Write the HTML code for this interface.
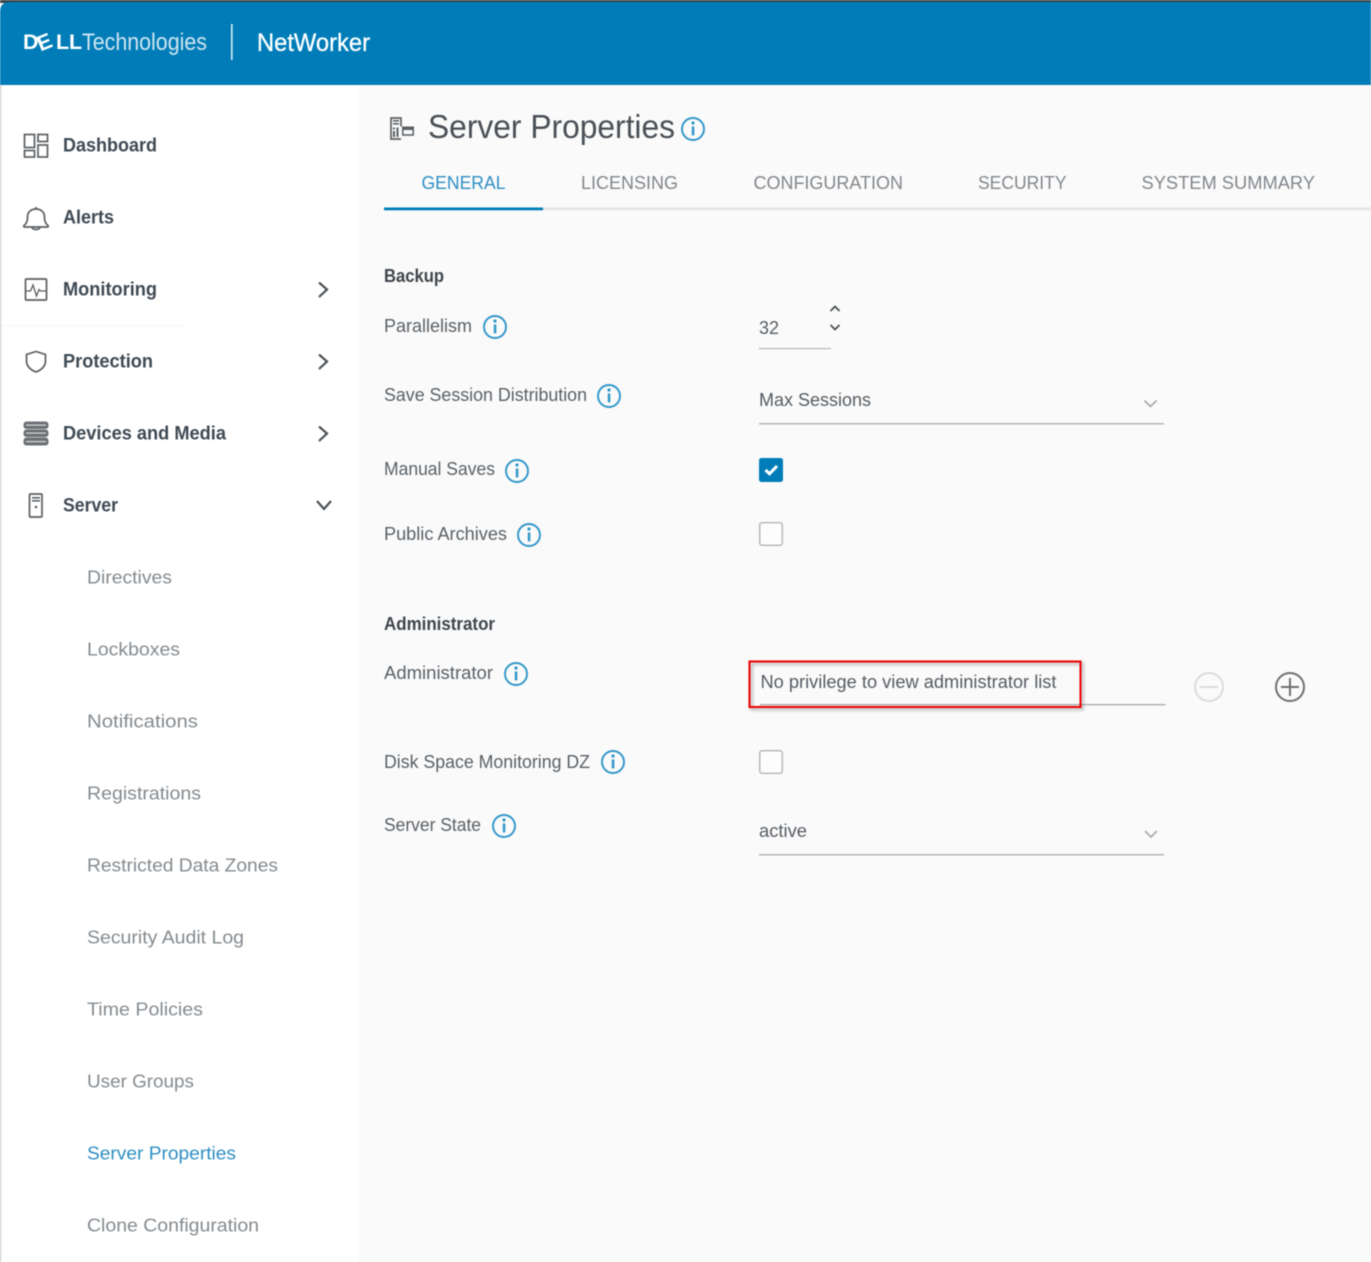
<!DOCTYPE html>
<html lang="en">
<head>
<meta charset="utf-8">
<title>Server Properties</title>
<style>
html,body{margin:0;padding:0;background:#fafafa;width:1371px;height:1262px;overflow:hidden}
svg{display:block;filter:blur(.45px)}
text{font-family:"Liberation Sans",sans-serif;white-space:pre}
.nav{font-size:19.5px;font-weight:700;fill:#3f4a54}
.sub{font-size:18.5px;fill:#858b90}
.lab{font-size:18px;fill:#5a6167}
.hd{font-size:18px;font-weight:700;fill:#3f454b}
.tab{font-size:18.5px;fill:#82878c}
.val{font-size:18px;fill:#565c62}
.ic{fill:none;stroke:#5b5f63;stroke-width:1.7}
.chev{fill:none;stroke:#4c5054;stroke-width:2.2}
</style>
</head>
<body>
<svg xmlns="http://www.w3.org/2000/svg" width="1371" height="1262" viewBox="0 0 1371 1262">
<defs>
<symbol id="inf" viewBox="-12 -12 24 24" overflow="visible">
<circle r="11" fill="none" stroke="#2f97c9" stroke-width="1.900"/>
<rect x="-1.200" y="-2.600" width="2.500" height="9" fill="#2f97c9"/>
<circle cy="-6" r="1.600" fill="#2f97c9"/>
</symbol>
<filter id="sh" x="-5%" y="-20%" width="110%" height="140%"><feDropShadow dx="2" dy="2" stdDeviation="1.500" flood-color="#000" flood-opacity=".35"/></filter>
</defs>

<!-- backgrounds -->
<rect width="1371" height="1262" fill="#fafafa"/>
<rect x="0" y="85" width="359" height="1177" fill="#ffffff"/>
<rect x="0" y="85" width="1.300" height="1177" fill="#d2d2d2"/>
<rect x="2" y="325" width="183" height="1" fill="#f7f7f7"/>
<rect width="1371" height="3" fill="#3a3f44"/>
<path d="M0 85V12Q0 2 10 2H1371V85Z" fill="#007db8"/>

<!-- header -->
<text x="23 40.500 56 69" y="49 51.500 49 49" font-size="21.500" font-weight="700" fill="#fff" rotate="0 -22 0 0">DELL</text>
<text x="82" y="50" font-size="24" fill="#cfe5f1" textLength="125" lengthAdjust="spacingAndGlyphs">Technologies</text>
<rect x="231" y="24" width="1.600" height="36" fill="#dbecf5"/>
<text x="257" y="51" font-size="25" fill="#fff" textLength="113" lengthAdjust="spacingAndGlyphs" stroke="#fff" stroke-width=".3">NetWorker</text>

<!-- nav icons -->
<g class="ic">
<rect x="24.500" y="134.500" width="10" height="13"/><rect x="38" y="134.500" width="9.500" height="7"/><rect x="24.500" y="150.500" width="10" height="6.500"/><rect x="38" y="145" width="9.500" height="12"/>
<path d="M24 225.500c2.500-2 3.500-4 3.500-8.500 0-5 3.500-8 8.500-8s8.500 3 8.500 8c0 4.500 1 6.500 3.500 8.500 .8 1 .3 1.500-1 1.500H25c-1.300 0-1.800-.5-1-1.500ZM32 227.500c.5 1.500 2 2 4 2s3.500-.5 4-2M36 209v-2"/>
<rect x="25.500" y="279" width="21" height="21" rx="1"/><path d="M26 291h4.500l2.500-6 3.500 11 2.500-6.500 1.500 1.500h6" stroke-width="1.300"/>
<path d="M36 351.500l9.500 3v6.500c0 5-4 9-9.500 11-5.500-2-9.500-6-9.500-11v-6.500Z"/>
<rect x="29.500" y="494" width="12.500" height="23" rx="1"/>
</g>
<g fill="#5b5f63">
<rect x="32" y="497" width="8" height="1.600"/><rect x="32" y="500" width="8" height="1.600"/><circle cx="36" cy="507" r="1.300"/>
</g>
<g fill="#6c7074">
<rect x="23.500" y="421.500" width="25" height="7.500" rx="3"/><rect x="23.500" y="429.500" width="25" height="7.500" rx="3"/><rect x="23.500" y="437.500" width="25" height="8" rx="3"/>
</g>
<g fill="#d8d8d8"><rect x="26" y="424.500" width="20" height="1.200"/><rect x="26" y="432.500" width="20" height="1.200"/><rect x="26" y="441" width="20" height="1.200"/></g>

<!-- nav text -->
<text class="nav" x="63" y="151.500" textLength="94" lengthAdjust="spacingAndGlyphs">Dashboard</text>
<text class="nav" x="63" y="223.500" textLength="51" lengthAdjust="spacingAndGlyphs">Alerts</text>
<text class="nav" x="63" y="295.500" textLength="94" lengthAdjust="spacingAndGlyphs">Monitoring</text>
<text class="nav" x="63" y="367.500" textLength="90" lengthAdjust="spacingAndGlyphs">Protection</text>
<text class="nav" x="63" y="439.500" textLength="163" lengthAdjust="spacingAndGlyphs">Devices and Media</text>
<text class="nav" x="63" y="511.500" textLength="55" lengthAdjust="spacingAndGlyphs">Server</text>
<path class="chev" d="M319 282.500l8 7-8 7.500M319 354.500l8 7-8 7.500M319 426.500l8 7-8 7.500M317 501l7 8 7-8"/>

<text class="sub" x="87" y="583.500" textLength="85" lengthAdjust="spacingAndGlyphs">Directives</text>
<text class="sub" x="87" y="655.500" textLength="93" lengthAdjust="spacingAndGlyphs">Lockboxes</text>
<text class="sub" x="87" y="727.500" textLength="111" lengthAdjust="spacingAndGlyphs">Notifications</text>
<text class="sub" x="87" y="799.500" textLength="114" lengthAdjust="spacingAndGlyphs">Registrations</text>
<text class="sub" x="87" y="871.500" textLength="191" lengthAdjust="spacingAndGlyphs">Restricted Data Zones</text>
<text class="sub" x="87" y="943.500" textLength="157" lengthAdjust="spacingAndGlyphs">Security Audit Log</text>
<text class="sub" x="87" y="1015.500" textLength="116" lengthAdjust="spacingAndGlyphs">Time Policies</text>
<text class="sub" x="87" y="1087.500" textLength="107" lengthAdjust="spacingAndGlyphs">User Groups</text>
<text class="sub" x="87" y="1159.500" textLength="149" lengthAdjust="spacingAndGlyphs" style="fill:#2e8fc4">Server Properties</text>
<text class="sub" x="87" y="1231.500" textLength="172" lengthAdjust="spacingAndGlyphs">Clone Configuration</text>

<!-- title -->
<path class="ic" d="M401 126.500v-8.500h-10v21h10" stroke-width="1.500"/>
<g fill="#5b5f63"><rect x="393" y="120" width="6" height="1.600"/><rect x="393" y="123" width="6" height="1.600"/><rect x="393" y="127.500" width="2" height="2"/><rect x="393" y="131" width="2" height="6"/><rect x="396.500" y="127.500" width="2" height="9.500"/><rect x="402" y="126.500" width="12" height="3.500"/></g>
<rect x="402.800" y="129" width="10.400" height="6" fill="none" stroke="#5b5f63" stroke-width="1.500"/>
<text x="428" y="138" font-size="33.500" fill="#4a5056" textLength="247" lengthAdjust="spacingAndGlyphs">Server Properties</text>
<use href="#inf" x="681" y="117" width="24" height="24"/>

<!-- tabs -->
<text class="tab" x="421.500" y="189" textLength="84" lengthAdjust="spacingAndGlyphs" style="fill:#2e8fc4">GENERAL</text>
<text class="tab" x="581" y="189" textLength="97" lengthAdjust="spacingAndGlyphs">LICENSING</text>
<text class="tab" x="753.500" y="189" textLength="149.500" lengthAdjust="spacingAndGlyphs">CONFIGURATION</text>
<text class="tab" x="978" y="189" textLength="88.500" lengthAdjust="spacingAndGlyphs">SECURITY</text>
<text class="tab" x="1141.500" y="189" textLength="173.500" lengthAdjust="spacingAndGlyphs">SYSTEM SUMMARY</text>
<rect x="384" y="207.500" width="987" height="2.500" fill="#e3e3e3"/>
<rect x="384" y="207.500" width="159" height="2.800" fill="#007db8"/>

<!-- form labels -->
<text class="hd" x="384" y="282" textLength="60" lengthAdjust="spacingAndGlyphs">Backup</text>
<text class="lab" x="384" y="332" textLength="88" lengthAdjust="spacingAndGlyphs">Parallelism</text>
<use href="#inf" x="483" y="315" width="24" height="24"/>
<text class="lab" x="384" y="401" textLength="203" lengthAdjust="spacingAndGlyphs">Save Session Distribution</text>
<use href="#inf" x="597" y="384" width="24" height="24"/>
<text class="lab" x="384" y="475" textLength="111" lengthAdjust="spacingAndGlyphs">Manual Saves</text>
<use href="#inf" x="505" y="459" width="24" height="24"/>
<text class="lab" x="384" y="540" textLength="123" lengthAdjust="spacingAndGlyphs">Public Archives</text>
<use href="#inf" x="517" y="523" width="24" height="24"/>
<text class="hd" x="384" y="630" textLength="111" lengthAdjust="spacingAndGlyphs">Administrator</text>
<text class="lab" x="384" y="679" textLength="109" lengthAdjust="spacingAndGlyphs">Administrator</text>
<use href="#inf" x="504" y="662" width="24" height="24"/>
<text class="lab" x="384" y="768" textLength="206" lengthAdjust="spacingAndGlyphs">Disk Space Monitoring DZ</text>
<use href="#inf" x="601" y="750" width="24" height="24"/>
<text class="lab" x="384" y="831" textLength="97" lengthAdjust="spacingAndGlyphs">Server State</text>
<use href="#inf" x="492" y="814" width="24" height="24"/>

<!-- controls -->
<text class="val" x="759" y="334" textLength="20" lengthAdjust="spacingAndGlyphs">32</text>
<path d="M830.500 311l4.500-4.500 4.500 4.500M830.500 325l4.500 4.500 4.500-4.500" fill="none" stroke="#4c5054" stroke-width="1.800"/>
<rect x="759" y="348" width="72" height="1.200" fill="#b5b5b5"/>

<text class="val" x="759" y="406" textLength="112" lengthAdjust="spacingAndGlyphs">Max Sessions</text>
<path d="M1144.500 400.500l6 6 6-6" fill="none" stroke="#a5a8aa" stroke-width="1.600"/>
<rect x="759" y="423" width="405" height="1.500" fill="#b5b5b5"/>

<rect x="759" y="458" width="24" height="24" rx="2.500" fill="#007db8"/>
<path d="M765.500 470l4 3.800 7.500-7.800" fill="none" stroke="#fff" stroke-width="3"/>
<rect x="759.700" y="522.700" width="22.600" height="22.600" rx="2.500" fill="#fdfdfd" stroke="#b4b4b4" stroke-width="1.400"/>

<rect x="760" y="704" width="405.500" height="1.300" fill="#a9a9a9"/>
<text class="val" x="760.500" y="688" textLength="296" lengthAdjust="spacingAndGlyphs">No privilege to view administrator list</text>
<rect x="749.500" y="661.500" width="331" height="45.500" fill="none" stroke="#f00000" stroke-width="2" filter="url(#sh)"/>
<circle cx="1209" cy="687" r="14" fill="none" stroke="#dcdcdc" stroke-width="2"/>
<rect x="1200" y="686" width="18" height="2" fill="#dcdcdc"/>
<circle cx="1290" cy="687" r="14" fill="none" stroke="#6e7073" stroke-width="2"/>
<path d="M1281 687h18M1290 678v18" stroke="#6e7073" stroke-width="2"/>

<rect x="759.700" y="750.700" width="22.600" height="22.600" rx="2.500" fill="#fdfdfd" stroke="#b4b4b4" stroke-width="1.400"/>

<text class="val" x="759" y="837" textLength="48" lengthAdjust="spacingAndGlyphs">active</text>
<path d="M1145 831l6 6 6-6" fill="none" stroke="#a5a8aa" stroke-width="1.600"/>
<rect x="759" y="854" width="405" height="1.500" fill="#b5b5b5"/>
</svg>
</body>
</html>
